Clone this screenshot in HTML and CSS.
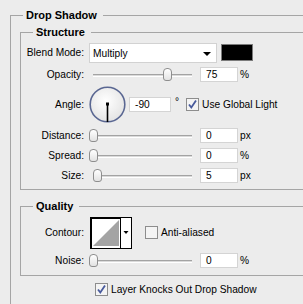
FILE: index.html
```html
<!DOCTYPE html>
<html lang="en">
<head>
    <meta charset="UTF-8">
    <title>Drop Shadow</title>
    <link rel="stylesheet" href="styles.css">
</head>
<body>

    <fieldset class="group outer">
        <legend>Drop Shadow</legend>

        <fieldset class="group structure">
            <legend>Structure</legend>

            <div class="row row-blend">
                <span class="lbl">Blend Mode:</span>
                <div class="select">Multiply<span class="arrow"></span></div>
                <div class="swatch"></div>
            </div>

            <div class="row row-opacity">
                <span class="lbl">Opacity:</span>
                <div class="slider"><div class="track"></div><div class="thumb" style="left: 74px"></div></div>
                <div class="field">75</div><span class="unit">%</span>
            </div>

            <div class="row row-angle">
                <span class="lbl">Angle:</span>
                <svg class="dial" width="37" height="37" viewBox="0 0 37 37">
                    <defs>
                        <radialGradient id="dialFill" cx="45%" cy="40%" r="60%">
                            <stop offset="0" stop-color="#ffffff"/>
                            <stop offset="1" stop-color="#e4e4e4"/>
                        </radialGradient>
                    </defs>
                    <circle cx="18.5" cy="18.5" r="17.3" fill="url(#dialFill)" stroke="#5a6792" stroke-width="1.6"/>
                    <line x1="18.5" y1="18" x2="18.5" y2="36" stroke="#000" stroke-width="1.6"/>
                    <rect x="17" y="16.5" width="3" height="3" fill="#000"/>
                </svg>
                <div class="field field-wide">-90</div>
                <span class="deg">°</span>
                <svg class="check" width="13" height="13" viewBox="0 0 13 13">
                    <rect x="0.5" y="0.5" width="12" height="12" fill="#f4f4f4" stroke="#8d8d8d"/>
                    <path d="M3 6.5 L5.3 9.5 L10 2.5" fill="none" stroke="#485a9c" stroke-width="1.8"/>
                </svg>
                <span class="check-text">Use Global Light</span>
            </div>

            <div class="row row-slider">
                <span class="lbl">Distance:</span>
                <div class="slider"><div class="track"></div><div class="thumb" style="left: 0px"></div></div>
                <div class="field">0</div><span class="unit">px</span>
            </div>

            <div class="row row-slider">
                <span class="lbl">Spread:</span>
                <div class="slider"><div class="track"></div><div class="thumb" style="left: 0px"></div></div>
                <div class="field">0</div><span class="unit">%</span>
            </div>

            <div class="row row-slider">
                <span class="lbl">Size:</span>
                <div class="slider"><div class="track"></div><div class="thumb" style="left: 4px"></div></div>
                <div class="field">5</div><span class="unit">px</span>
            </div>
        </fieldset>

        <fieldset class="group quality">
            <legend>Quality</legend>

            <div class="row row-contour">
                <span class="lbl">Contour:</span>
                <svg class="contour" width="42" height="32" viewBox="0 0 42 32">
                    <rect x="0.5" y="0.5" width="41" height="31" fill="#fff" stroke="#000"/>
                    <rect x="1" y="1" width="29" height="1" fill="#000"/>
                    <rect x="1" y="1" width="1" height="30" fill="#000"/>
                    <polygon points="3,29 29,3 29,29" fill="#a4a4a4"/>
                    <line x1="30.5" y1="1" x2="30.5" y2="31" stroke="#000"/>
                    <polygon points="33.5,14 38.5,14 36,17" fill="#000"/>
                </svg>
                <svg class="check" width="13" height="13" viewBox="0 0 13 13">
                    <rect x="0.5" y="0.5" width="12" height="12" fill="#f4f4f4" stroke="#8d8d8d"/>
                </svg>
                <span class="check-text">Anti-aliased</span>
            </div>

            <div class="row row-noise">
                <span class="lbl">Noise:</span>
                <div class="slider"><div class="track"></div><div class="thumb" style="left: 0px"></div></div>
                <div class="field">0</div><span class="unit">%</span>
            </div>
        </fieldset>

        <div class="row row-knock">
            <svg class="check" width="13" height="13" viewBox="0 0 13 13">
                <rect x="0.5" y="0.5" width="12" height="12" fill="#f4f4f4" stroke="#8d8d8d"/>
                <path d="M3 6.5 L5.3 9.5 L10 2.5" fill="none" stroke="#485a9c" stroke-width="1.8"/>
            </svg>
            <span class="check-text">Layer Knocks Out Drop Shadow</span>
        </div>
    </fieldset>

</body>
</html>
```

FILE: styles.css
```css
body {
    margin: 0;
    background-color: #ececec;
    font-family: "Liberation Sans", Arial, sans-serif;
    font-size: 10.2px;
    line-height: 13px;
    color: #000;
    overflow: hidden;
}
.group {
    margin: 0;
    padding: 0;
    min-width: 0;
    border: 1px solid #a5a5a5;
    border-right: none;
}
.group legend {
    margin-left: 12px;
    padding: 0 6px 0 3px;
    font-size: 11px;
    font-weight: bold;
    line-height: 13px;
}
.outer {
    width: 293px;
    height: 295px;
    margin: 9px 0 0 10px;
    padding: 0 0 0 9px;
    box-sizing: border-box;
    border-bottom: none;
}
.outer > legend {
    margin-left: 3px;
}
.structure {
    margin-top: 4px;
    padding-bottom: 4px;
}
.quality {
    margin-top: 10px;
    padding-bottom: 6px;
}
.row {
    display: flex;
    align-items: center;
}
.row-blend { height: 27px; }
.row-opacity { height: 17px; }
.row-angle { height: 42px; }
.row-slider { height: 20px; }
.row-contour { height: 39px; }
.row-noise { height: 17px; }
.row-knock {
    height: 26px;
    margin-left: 75px;
}
.lbl {
    flex: none;
    width: 63px;
    margin-right: 5px;
    text-align: right;
}
.select {
    position: relative;
    box-sizing: border-box;
    width: 128px;
    height: 20px;
    padding: 3px 0 0 3px;
    background: #fff;
    border: 1px solid #d2d2d2;
}
.arrow {
    position: absolute;
    right: 5px;
    top: 8px;
    width: 0;
    height: 0;
    border-left: 4px solid transparent;
    border-right: 4px solid transparent;
    border-top: 4px solid #000;
}
.swatch {
    box-sizing: border-box;
    width: 32px;
    height: 17px;
    margin-left: 4px;
    background: #000;
    border: 1px solid #7b7b7b;
}
.slider {
    position: relative;
    flex: none;
    width: 107px;
    height: 13px;
    margin-right: 4px;
}
.track {
    position: absolute;
    left: 4px;
    top: 6px;
    width: 99px;
    height: 1px;
    background: #dadada;
    border-top: 1px solid #a3a3a3;
    border-bottom: 1px solid #fff;
}
.thumb {
    position: absolute;
    top: 0;
    box-sizing: border-box;
    width: 9px;
    height: 13px;
    background: linear-gradient(#ffffff, #e2e2e2);
    border: 1px solid #8e8e8e;
    border-radius: 4px 4px 3px 3px;
}
.field {
    flex: none;
    box-sizing: border-box;
    width: 38px;
    height: 15px;
    padding-left: 5px;
    background: #fff;
    border: 1px solid #d4d4d4;
    line-height: 13px;
}
.field-wide {
    width: 42px;
}
.unit {
    margin-left: 2px;
}
.dial {
    flex: none;
    margin-right: 3px;
}
.deg {
    align-self: flex-start;
    margin: 12px 0 0 4px;
}
.check {
    flex: none;
    margin-left: 7px;
}
.check-text {
    margin-left: 3px;
}
.contour {
    flex: none;
    margin-left: 1px;
}
.row-contour .check {
    margin-left: 13px;
}
.row-knock .check {
    margin-left: 0;
}
```
